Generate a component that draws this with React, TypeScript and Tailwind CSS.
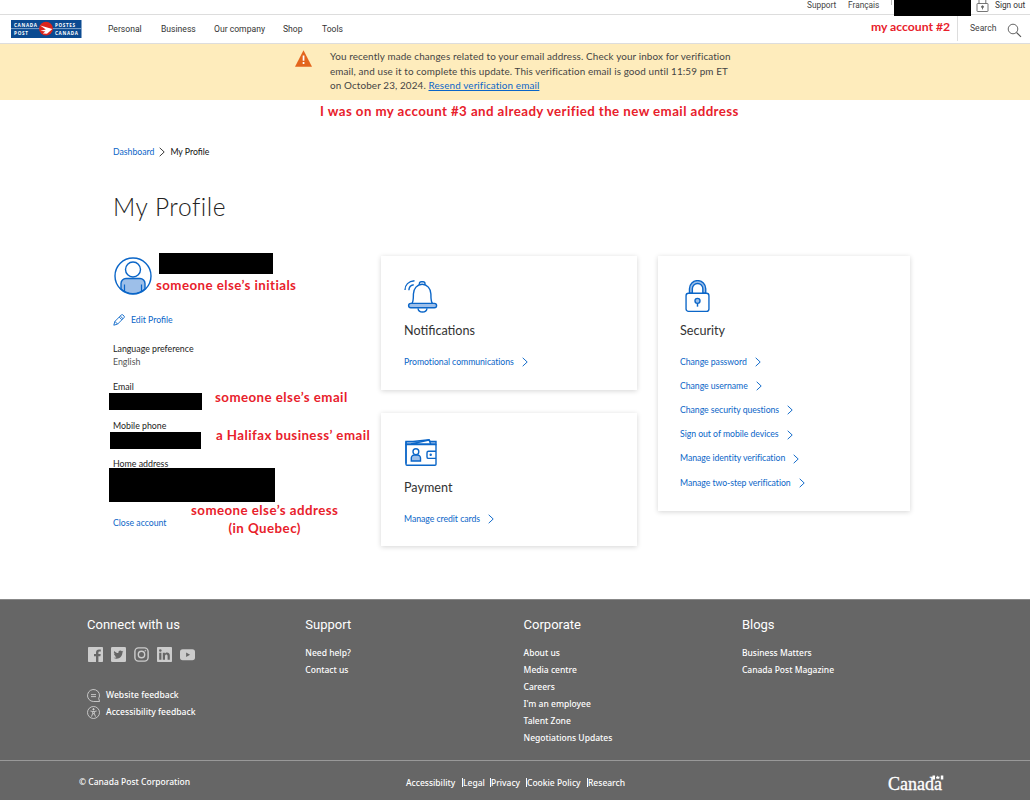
import type { ReactNode } from 'react'

const NAV = [
  { label: 'Personal', cls: 'w-[53px]' },
  { label: 'Business', cls: 'w-[53px]' },
  { label: 'Our company', cls: 'w-[69px]' },
  { label: 'Shop', cls: 'w-[39px]' },
  { label: 'Tools', cls: 'w-[30px]' },
]

const SECURITY_LINKS = [
  'Change password',
  'Change username',
  'Change security questions',
  'Sign out of mobile devices',
  'Manage identity verification',
  'Manage two-step verification',
]

const CORPORATE_LINKS = [
  'About us',
  'Media centre',
  'Careers',
  "I'm an employee",
  'Talent Zone',
  'Negotiations Updates',
]

const LEGAL_LINKS = [
  { label: 'Accessibility', cls: 'w-[56px]' },
  { label: 'Legal', cls: 'w-[28px] border-l' },
  { label: 'Privacy', cls: 'w-[36px] border-l' },
  { label: 'Cookie Policy', cls: 'w-[61px] border-l' },
  { label: 'Research', cls: 'border-l' },
]

const Logo = () => (
  <svg width="71" height="18" viewBox="0 0 71 18" className="block">
    <rect width="70.5" height="18" fill="#0b4a91" />
    <path d="M0 8.6h70.5" stroke="#9db9d8" strokeWidth="0.8" />
    <g fill="#fff" fontFamily="'Open Sans', sans-serif" fontWeight="700" fontSize="4.6">
      <text x="3" y="6.6" textLength="23">CANADA</text>
      <text x="3" y="14.7" textLength="14">POST</text>
      <text x="44" y="6.6" textLength="20">POSTES</text>
      <text x="44" y="14.7" textLength="23">CANADA</text>
    </g>
    <circle cx="35" cy="8.7" r="6.9" fill="#dc241c" />
    <path d="M29.2 5.4 41.400 9 36 13.800l-4.200-.3 2.600-2-5-.7 5.400-1.200z" fill="#fff" />
  </svg>
)

const Chevron = ({ className = '' }: { className?: string }) => (
  <svg width="6" height="10" viewBox="0 0 6 10" fill="none" stroke="currentColor" className={className}>
    <path d="M.7.8 5.2 5 .7 9.2" strokeWidth="0.95" />
  </svg>
)

const HeaderLockIcon = () => (
  <svg width="13" height="16" viewBox="0 0 13 16" fill="none" stroke="#666" strokeWidth="0.9">
    <path d="M3 7.5V4a3.4 3.4 0 0 1 6.8 0v3.5" />
    <rect x="1" y="7.5" width="11" height="8" rx="0.5" />
    <circle cx="6.5" cy="10.8" r="1" fill="#666" />
    <path d="M6.5 11v2.4" />
  </svg>
)

const SearchIcon = () => (
  <svg width="15" height="15" viewBox="0 0 15 15" fill="none" stroke="#555">
    <circle cx="6" cy="6" r="4.8" strokeWidth="0.9" />
    <path d="m9.5 9.5 4.5 4.3" strokeWidth="1.1" />
  </svg>
)

const WarningIcon = () => (
  <svg width="17" height="17" viewBox="0 0 17 17">
    <path d="M8.5.2 17 16.8H0z" fill="#e3651d" />
    <path d="M7.7 5.6h1.7v5.2H7.7zM7.7 12.1h1.7v1.9H7.7z" fill="#fff" />
  </svg>
)

const AvatarIcon = () => (
  <svg width="38" height="38" viewBox="0 0 38 38" fill="none" stroke="#0b66c8" strokeWidth="1.4">
    <path
      d="M7 32V26.500a5 5 0 0 1 5-5h14a5 5 0 0 1 5 5V32a18 18 0 0 1-24 0z"
      fill="#9dbfe9"
    />
    <path d="M10.500 27.500v7.200M27.500 27.500v7.200" strokeWidth="1.2" />
    <circle cx="19" cy="12.500" r="7.500" fill="#fff" />
    <circle cx="19" cy="19" r="18" />
  </svg>
)

const PencilIcon = () => (
  <svg width="12" height="12" viewBox="0 0 12 12" fill="none" stroke="#0b66c8" strokeWidth="0.9">
    <path d="M.8 11.200 1.900 7.400 8.300 1a1.200 1.200 0 0 1 1.700 0l1 1a1.200 1.200 0 0 1 0 1.700L4.600 10.100zM7.300 2l2.700 2.700M6.200 3.100l2.700 2.700M1.900 7.400l2.700 2.700" />
  </svg>
)

const BellIcon = () => (
  <svg width="34" height="33" viewBox="0 0 34 33" fill="none" stroke="#0b66c8" strokeWidth="1.4">
    <path d="M15.400 4.600v-.8a2 2 0 0 1 2-2h1.600a2 2 0 0 1 2 2v.8" />
    <path d="M7.900 23.500c1.600-2 1.500-5 1.500-9.500a8.700 9.700 0 0 1 17.500 0c0 4.500-.1 7.500 1.600 9.500" />
    <rect x="4.600" y="23.400" width="28" height="4.400" rx="2.200" fill="#9dbfe9" />
    <path d="M14 28.300c.7 5 8.300 5 9 0" />
    <path d="M1 10C1 5 4.500 1.200 10.500.8M4.900 10.300c0-3 1.900-5.100 4.800-5.600" />
  </svg>
)

const WalletIcon = () => (
  <svg width="32" height="27" viewBox="0 0 32 27" fill="none" stroke="#0b66c8" strokeWidth="1.4">
    <path d="M1 2.500h7L24 .8l1.200 1.700H31v3H1z" fill="#9dbfe9" />
    <path d="M6 5 24 1l1.800 4.200z" fill="#fff" />
    <rect x="1" y="5.300" width="30" height="21" rx="1" />
    <path d="M1 2.500v22" />
    <path d="M6.300 22v-3a3 3 0 0 1 3-3h3.200a3 3 0 0 1 3 3v3z" fill="#9dbfe9" />
    <circle cx="10.900" cy="12.700" r="2.900" fill="#fff" />
    <path d="M31 12.200h-7.500a1.500 1.500 0 0 0-1.500 1.500v4.200a1.500 1.500 0 0 0 1.500 1.500H31" />
    <circle cx="25.700" cy="15.800" r="0.500" fill="#0b66c8" />
  </svg>
)

const LockIcon = () => (
  <svg width="25" height="32" viewBox="0 0 25 33" fill="none" stroke="#0b66c8" strokeWidth="1.4">
    <path d="M4.200 13.500V9a8.400 8.400 0 0 1 16.800 0v4.500h-3V9a5.400 5.400 0 0 0-10.800 0v4.500z" fill="#9dbfe9" />
    <rect x="0.700" y="13.700" width="23.600" height="18.600" rx="2.500" fill="#fff" />
    <circle cx="12.500" cy="21.500" r="2.600" fill="#9dbfe9" />
    <path d="M12.500 24v3.500" strokeWidth="1.500" />
  </svg>
)

const FacebookIcon = () => (
  <svg width="15" height="15" viewBox="0 0 15 15">
    <rect width="15" height="15" rx="0.800" fill="#ccc" />
    <path d="M8 15V9.200H6V7h2V5.500C8 3.500 9.200 2.400 11 2.400h1.800v2.200h-1.300c-.8 0-1.100.4-1.100 1.100V7h2.300l-.3 2.200h-2V15z" fill="#666" />
  </svg>
)

const TwitterIcon = () => (
  <svg width="15" height="15" viewBox="0 0 15 15">
    <rect width="15" height="15" rx="1.300" fill="#ccc" />
    <path
      d="M12.500 4.600c-.4.200-.8.300-1.200.300.400-.300.700-.700.900-1.100-.400.200-.8.400-1.300.500a2 2 0 0 0-3.500 1.800C5.700 6 4.200 5.200 3.200 4a2 2 0 0 0 .6 2.700c-.3 0-.6-.1-.9-.2 0 1 .7 1.800 1.600 2-.3.100-.6.100-.9 0 .3.800 1 1.400 1.900 1.400a4 4 0 0 1-3 .8c3.800 2.400 8.900.1 8.900-5.100.400-.300.800-.700 1.100-1z"
      fill="#666"
    />
  </svg>
)

const InstagramIcon = () => (
  <svg width="15" height="15" viewBox="0 0 15 15" fill="none" stroke="#ccc" strokeWidth="1.400">
    <rect x="0.900" y="0.900" width="13.200" height="13.200" rx="3.600" />
    <circle cx="7.500" cy="7.500" r="3.200" />
    <circle cx="11.400" cy="3.700" r="0.400" strokeWidth="0.900" />
  </svg>
)

const LinkedinIcon = () => (
  <svg width="15" height="15" viewBox="0 0 15 15">
    <rect width="15" height="15" rx="0.800" fill="#ccc" />
    <path
      d="M2.200 5.700h2.200v7H2.200zM5.800 5.700h2.100v1c.9-1.700 4.900-1.800 4.900 1.800v4.200h-2.200V9c0-2.200-2.600-2-2.600 0v3.700H5.800z"
      fill="#666"
    />
    <circle cx="3.300" cy="3.500" r="1.300" fill="#666" />
  </svg>
)

const YoutubeIcon = () => (
  <svg width="15" height="15" viewBox="0 0 15 15">
    <rect y="2.300" width="15" height="11" rx="2.700" fill="#ccc" />
    <path d="m6.100 5.600 4 2.200-4 2.200z" fill="#666" />
  </svg>
)

const FeedbackIcon = () => (
  <svg width="13" height="13" viewBox="0 0 13 13" fill="none" stroke="#ddd" strokeWidth="0.800">
    <path d="M6.500 12.500a6 6 0 1 1 5.200-3L12.600 12.500z" />
    <path d="M4 5.600h5M4 7.600h5" />
  </svg>
)

const AccessibilityIcon = () => (
  <svg width="13" height="13" viewBox="0 0 13 13" fill="none" stroke="#ddd" strokeWidth="0.800">
    <circle cx="6.500" cy="6.500" r="6" />
    <circle cx="6.500" cy="3.300" r="0.700" fill="#ddd" />
    <path d="m3.400 5 2.300.5v2L4.500 10.600M9.600 5l-2.300.5v2l1.200 3.100M5.700 5.500h1.600M5.700 7.700h1.600" />
  </svg>
)

/** Red marker note laid over the page. */
const Note = ({ className, children }: { className: string; children: ReactNode }) => (
  <p
    className={`absolute whitespace-nowrap leading-[18px] font-bold text-[#e8212b] ${className}`}
  >
    {children}
  </p>
)

const ArrowLink = ({ children }: { children: ReactNode }) => (
  <a className="flex h-[24.2px] items-center gap-[8px] text-[8.7px] tracking-[-0.04px] text-[#0b66c8]">
    {children}
    <Chevron className="mt-[2px]" />
  </a>
)

const Card = ({ icon, title, links, className }: { icon: ReactNode; title: string; links: string[]; className: string }) => (
  <section className={`bg-white pt-[23px] shadow-[0_1px_5px_rgba(0,0,0,0.17)] ${className}`}>
    <div className="flex h-[34px] items-center">{icon}</div>
    <h2 className="mt-[8px] h-5 text-[12.6px] leading-5 text-[#333]">{title}</h2>
    <div className="mt-2">
      {links.map((link) => (
        <ArrowLink key={link}>{link}</ArrowLink>
      ))}
    </div>
  </section>
)

const FooterColumn = ({ title, links }: { title: string; links: string[] }) => (
  <div className="w-[218.3px]">
    <h3 className="h-5 font-[Roboto,sans-serif] text-[13px] leading-5">{title}</h3>
    <ul className="mt-[9px]">
      {links.map((link) => (
        <li key={link} className="h-[17px] text-[8.5px] leading-[17px] font-medium">
          {link}
        </li>
      ))}
    </ul>
  </div>
)

const Header = () => (
  <header className="relative font-[Roboto,sans-serif] text-[#444]">
    <div className="flex h-[15px] items-start border-b border-[#ddd] pl-[807px] text-[8.3px] leading-[10px]">
      <span className="w-[41px]">Support</span>
      <span className="w-[43px]">Français</span>
      <span className="h-[5px] w-[3px] border-l border-[#bbb]" />
      <span className="relative z-10 h-4 w-[77px] bg-black" />
      <span className="-mt-[4px] ml-[5px] w-[19px]">
        <HeaderLockIcon />
      </span>
      <span className="whitespace-nowrap text-[#333]">Sign out</span>
    </div>
    <div className="flex h-[29px] items-center border-b border-[#ddd] pl-[11px]">
      <Logo />
      <nav className="mt-px ml-[26px] flex w-[849px] text-[8.6px] text-[#333]">
        {NAV.map((item) => (
          <a key={item.label} className={`whitespace-nowrap ${item.cls}`}>
            {item.label}
          </a>
        ))}
      </nav>
      <div className="flex h-[26px] w-[73px] shrink-0 -translate-y-px items-center gap-[11px] border-l border-[#ddd] pl-[12px] text-[8.6px]">
        <span>Search</span>
        <span className="mt-[5px]">
          <SearchIcon />
        </span>
      </div>
    </div>
    <Note className="top-[18px] left-[871px] font-['Lato',sans-serif] text-[12.2px]">my account #2</Note>
  </header>
)

const Banner = () => (
  <div className="flex h-14 bg-[#feecbc] pl-[295px]">
    <div className="mt-[6px] w-[35px]">
      <WarningIcon />
    </div>
    <p className="mt-[5px] text-[9.9px] leading-[14.5px] tracking-[0.12px] whitespace-nowrap text-[#444]">
      You recently made changes related to your email address. Check your inbox for verification
      <br />
      email, and use it to complete this update. This verification email is good until 11:59 pm ET
      <br />
      on October 23, 2024. <a className="text-[#0b66c8] underline">Resend verification email</a>
    </p>
  </div>
)

const ProfileColumn = () => (
  <div className="relative w-[268px] text-[8.8px] leading-3 text-[#222]">
    <div className="flex h-[53px]">
      <div className="mt-[1px] ml-[1px]">
        <AvatarIcon />
      </div>
      <div className="-mt-[3px] ml-[7px] h-[20.5px] w-[114px] bg-black" />
    </div>
    <a className="mt-[3px] flex h-4 items-center gap-[6px] text-[8.7px] text-[#0b66c8]">
      <PencilIcon />
      Edit Profile
    </a>
    <dl className="mt-[15px]">
      <dt>Language preference</dt>
      <dd className="mt-px text-[#555]">English</dd>
      <dt className="mt-[13px]">Email</dt>
      <dd className="relative -ml-1 h-[17px] w-[93px] bg-black" />
      <dt className="mt-[10px]">Mobile phone</dt>
      <dd className="relative -ml-[3px] h-[17px] w-[91px] bg-black" />
      <dt className="mt-[9px]">Home address</dt>
      <dd className="relative -mt-[2px] -ml-1 h-[34px] w-[166px] bg-black" />
    </dl>
    <a className="mt-[15px] block text-[8.7px] text-[#0b66c8]">Close account</a>
    <Note className="top-[20px] left-[43px] text-[13.3px] tracking-[0.43px]">someone else’s initials</Note>
    <Note className="top-[132px] left-[102px] text-[13.3px] tracking-[0.45px]">someone else’s email</Note>
    <Note className="top-[170px] left-[103px] text-[13.3px] tracking-[0.43px]">a Halifax business’ email</Note>
    <Note className="top-[245px] left-[78px] text-center text-[13.3px] tracking-[0.45px]">
      someone else’s address
      <br />
      (in Quebec)
    </Note>
  </div>
)

const Footer = () => (
  <footer className="h-[201px] border-t border-[#888] bg-[#666] font-['Noto_Sans',sans-serif] text-white">
    <div className="flex h-[160px] pt-[15px] pl-[87px]">
      <div className="w-[218.3px]">
        <h3 className="h-5 font-[Roboto,sans-serif] text-[13px] leading-5">Connect with us</h3>
        <div className="mt-[12px] ml-[1px] flex gap-[8px]">
          <FacebookIcon />
          <TwitterIcon />
          <InstagramIcon />
          <LinkedinIcon />
          <YoutubeIcon />
        </div>
        <ul className="mt-[25px] text-[8.6px] font-medium">
          <li className="flex h-[17px] items-center gap-[6px]">
            <FeedbackIcon />
            Website feedback
          </li>
          <li className="flex h-[17px] items-center gap-[6px]">
            <AccessibilityIcon />
            Accessibility feedback
          </li>
        </ul>
      </div>
      <FooterColumn title="Support" links={['Need help?', 'Contact us']} />
      <FooterColumn title="Corporate" links={CORPORATE_LINKS} />
      <FooterColumn title="Blogs" links={['Business Matters', 'Canada Post Magazine']} />
    </div>
    <div className="flex h-10 items-center border-t border-[#999] pt-[4px] pl-[79px] text-[8.5px] font-medium">
      <span className="w-[327px]">© Canada Post Corporation</span>
      <div className="flex w-[481px] leading-[9px]">
        {LEGAL_LINKS.map((link) => (
          <a key={link.label} className={`whitespace-nowrap ${link.cls}`}>
            {link.label}
          </a>
        ))}
      </div>
      <svg width="58" height="20" viewBox="0 0 58 20" fill="#fff">
        <text x="1" y="17" textLength="54" fontSize="18" fontFamily="'Liberation Serif', serif" stroke="#fff" strokeWidth="0.3">
          Canada
        </text>
        <path d="M45.500 2.500h2.500v4h-2.500zM53.800 2.500h2.500v4h-2.500zM48.900 3.500l1 .4.900-1.500.9 1.500 1-.4-.5 2.300h-2.800z" />
      </svg>
    </div>
  </footer>
)

export default function App() {
  return (
    <div className="flex h-[800px] w-[1030px] flex-col overflow-hidden bg-white font-['Lato',sans-serif]">
      <Header />
      <Banner />
      <main className="relative flex-1 pl-[113px]">
        <Note className="top-[2px] left-[320px] text-[13.3px] tracking-[0.42px]">
          I was on my account #3 and already verified the new email address
        </Note>
        <div className="flex h-3 translate-y-[46px] items-center text-[8.7px] text-[#111]">
          <a className="text-[#0b66c8]">Dashboard</a>
          <Chevron className="mx-[5px] text-[#333]" />
          My Profile
        </div>
        <h1 className="mt-[79px] h-8 text-[24.5px] leading-8 font-light tracking-[0.55px] text-[#222]">My Profile</h1>
        <div className="mt-[33px] flex items-start">
          <ProfileColumn />
          <div className="mr-[21px] flex w-[256px] flex-col gap-[23px]">
            <Card icon={<BellIcon />} title="Notifications" links={['Promotional communications']} className="h-[134px] pl-[23px]" />
            <Card
              icon={<span className="mb-[2px] ml-[1px]"><WalletIcon /></span>}
              title="Payment"
              links={['Manage credit cards']}
              className="h-[133px] pl-[23px]"
            />
          </div>
          <Card
            icon={<span className="ml-[5px]"><LockIcon /></span>}
            title="Security"
            links={SECURITY_LINKS}
            className="h-[255px] w-[252px] pl-[22px]"
          />
        </div>
      </main>
      <Footer />
    </div>
  )
}
